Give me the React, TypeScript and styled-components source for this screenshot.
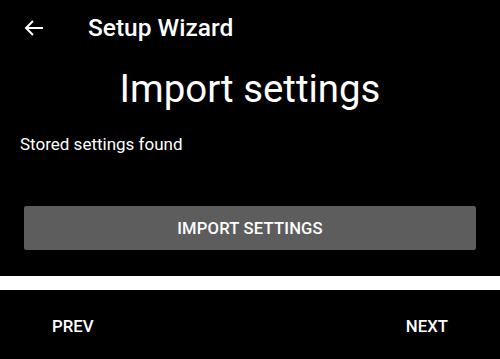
import React from "react";
import styled, { createGlobalStyle } from "styled-components";

const Global = createGlobalStyle`
  html, body { margin: 0; padding: 0; background: #000; }
  body { font-family: Roboto, "Noto Sans", sans-serif; color: #fff; }
`;

const Screen = styled.div`
  width: 500px;
  height: 359px;
  background: #000;
  display: flex;
  flex-direction: column;
  overflow: hidden;
`;

const Header = styled.header`
  height: 56px;
  display: flex;
  align-items: center;
  padding-left: 24px;
  box-sizing: border-box;
`;

const BackButton = styled.button`
  background: none;
  border: 0;
  padding: 0;
  margin: 0 44px 0 0;
  width: 20px;
  height: 20px;
  display: flex;
  align-items: center;
  justify-content: center;
  color: #fff;
`;

const HeaderTitle = styled.h1`
  margin: 0;
  font-size: 24.5px;
  font-weight: 500;
  line-height: 24px;
`;

const Title = styled.h2`
  margin: 13px 0 0;
  text-align: center;
  font-size: 38.4px;
  font-weight: 400;
  line-height: 39px;
`;

const Body = styled.p`
  margin: 28px 0 0 20px;
  font-size: 17px;
  line-height: 17px;
`;

const ActionButton = styled.button`
  margin: 53px 24px 0 24px;
  height: 44px;
  background: #5d5d5d;
  border: 0;
  border-radius: 2px;
  color: #fff;
  font-family: Roboto, sans-serif;
  font-size: 16.6px;
  font-weight: 500;
  letter-spacing: 0.2px;
`;

const Divider = styled.div`
  margin-top: 26px;
  height: 14px;
  background: #fff;
`;

const Footer = styled.footer`
  flex: 1;
  display: flex;
  align-items: center;
  justify-content: space-between;
  padding: 3px 52px 0 52px;
`;

const NavButton = styled.button`
  background: none;
  border: 0;
  padding: 0;
  color: #fff;
  font-family: Roboto, sans-serif;
  font-size: 16.8px;
  font-weight: 500;
`;

export default function App() {
  return (
    <>
      <Global />
      <Screen>
        <Header>
          <BackButton aria-label="Back">
            <svg width="20" height="16" viewBox="0 0 20 16" fill="none" stroke="#fff" strokeWidth="2">
              <path d="M19 8H2M9 1L2 8l7 7" />
            </svg>
          </BackButton>
          <HeaderTitle>Setup Wizard</HeaderTitle>
        </Header>
        <Title>Import settings</Title>
        <Body>Stored settings found</Body>
        <ActionButton>IMPORT SETTINGS</ActionButton>
        <Divider />
        <Footer>
          <NavButton>PREV</NavButton>
          <NavButton>NEXT</NavButton>
        </Footer>
      </Screen>
    </>
  );
}
